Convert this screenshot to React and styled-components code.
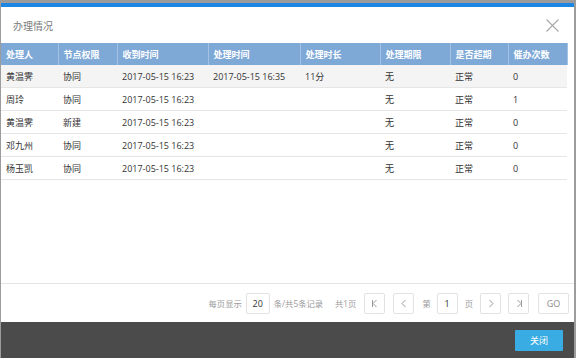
import React from "react";
import styled, { createGlobalStyle } from "styled-components";

const GlobalStyle = createGlobalStyle`
  html, body {
    margin: 0;
    padding: 0;
    background: #9c9c9c;
    font-family: "Open Sans", "Noto Sans CJK SC", sans-serif;
  }
`;

const columns = [
  { title: "处理人", width: 57 },
  { title: "节点权限", width: 59 },
  { title: "收到时间", width: 91 },
  { title: "处理时间", width: 92 },
  { title: "处理时长", width: 80 },
  { title: "处理期限", width: 70 },
  { title: "是否超期", width: 58 },
  { title: "催办次数", width: 59 },
];

const rows = [
  ["黄温霁", "协同", "2017-05-15 16:23", "2017-05-15 16:35", "11分", "无", "正常", "0"],
  ["周玲", "协同", "2017-05-15 16:23", "", "", "无", "正常", "1"],
  ["黄温霁", "新建", "2017-05-15 16:23", "", "", "无", "正常", "0"],
  ["邓九州", "协同", "2017-05-15 16:23", "", "", "无", "正常", "0"],
  ["杨玉凯", "协同", "2017-05-15 16:23", "", "", "无", "正常", "0"],
];

const Modal = styled.div`
  margin: 3px 2px 0 1px;
  height: 351px;
  background: #fff;
  border-top: 4px solid #1c86e2;
  display: flex;
  flex-direction: column;
`;

const Header = styled.div`
  height: 36px;
  display: flex;
  align-items: center;
  justify-content: space-between;
  padding: 0 15px 0 12px;
`;

const Title = styled.div`
  font-size: 10px;
  color: #7a7a7a;
`;

const Close = styled.button`
  border: 0;
  background: none;
  padding: 0;
  width: 13px;
  height: 13px;
  display: flex;
  cursor: pointer;
`;

const TableWrap = styled.div`
  flex: 1;
  padding-right: 6px;
  border-bottom: 1px solid #e4e4e4;
`;

const Table = styled.table`
  width: 566px;
  table-layout: fixed;
  border-collapse: collapse;
  font-size: 9px;
`;

const Th = styled.th`
  height: 22px;
  padding: 0 0 0 5px;
  background: #7ea9d7;
  color: #fff;
  font-weight: bold;
  text-align: left;
  border-right: 1px solid #a3c2e4;
  white-space: nowrap;
`;

const Tr = styled.tr`
  background: ${(p) => (p.$shaded ? "#f4f4f4" : "#fff")};
  border-bottom: 1px solid #e6e6e6;
`;

const Td = styled.td`
  height: 22px;
  padding: 0 0 0 5px;
  color: #333;
  white-space: nowrap;
`;

const Pager = styled.div`
  height: 38px;
  display: flex;
  align-items: center;
  justify-content: flex-end;
  padding-right: 5px;
  font-size: 8.3px;
  color: #9a9a9a;
`;

const Label = styled.span`
  margin: 0 ${(p) => p.$gap ?? 4}px 0 0;
  white-space: nowrap;
`;

const Box = styled.div`
  width: ${(p) => p.$w ?? 21}px;
  height: 21px;
  box-sizing: border-box;
  border: 1px solid #e2e2e2;
  border-radius: 2px;
  display: flex;
  align-items: center;
  justify-content: center;
  margin-right: ${(p) => p.$gap ?? 4}px;
  color: ${(p) => (p.$dark ? "#333" : "#8a8a8a")};
  font-size: 9px;
  background: #fff;
`;

const Footer = styled.div`
  height: 36px;
  background: #4b4b4b;
  display: flex;
  align-items: center;
  justify-content: flex-end;
  padding-right: 11px;
`;

const CloseBtn = styled.button`
  width: 48px;
  height: 21px;
  border: 0;
  border-radius: 1px;
  background: #39ade3;
  color: #fff;
  font-family: "Noto Sans CJK SC", sans-serif;
  font-size: 9px;
  padding: 0;
`;

const Chevron = ({ dir, bar }) => {
  const left = dir === "left";
  return (
    <svg width="8" height="9" viewBox="0 0 8 9" fill="none" stroke="#999" strokeWidth="1">
      {left ? <path d="M5.5 1 L2 4.5 L5.5 8" /> : <path d="M2.5 1 L6 4.5 L2.5 8" />}
      {bar && (left ? <path d="M1.5 1 V8" /> : <path d="M6.5 1 V8" />)}
    </svg>
  );
};

export default function App() {
  return (
    <>
      <GlobalStyle />
      <Modal>
        <Header>
          <Title>办理情况</Title>
          <Close aria-label="close">
            <svg width="13" height="13" viewBox="0 0 13 13" stroke="#a9a9a9" strokeWidth="1.1">
              <path d="M0.5 0.5 L12.5 12.5 M12.5 0.5 L0.5 12.5" />
            </svg>
          </Close>
        </Header>
        <TableWrap>
          <Table>
            <colgroup>
              {columns.map((c) => (
                <col key={c.title} style={{ width: c.width }} />
              ))}
            </colgroup>
            <thead>
              <tr>
                {columns.map((c) => (
                  <Th key={c.title}>{c.title}</Th>
                ))}
              </tr>
            </thead>
            <tbody>
              {rows.map((r, i) => (
                <Tr key={i} $shaded={i === 0}>
                  {r.map((v, j) => (
                    <Td key={j}>{v}</Td>
                  ))}
                </Tr>
              ))}
            </tbody>
          </Table>
        </TableWrap>
        <Pager>
          <Label>每页显示</Label>
          <Box $w={24} $dark>20</Box>
          <Label $gap={12}>条/共5条记录</Label>
          <Label $gap={8}>共1页</Label>
          <Box $gap={8}><Chevron dir="left" bar /></Box>
          <Box $gap={8}><Chevron dir="left" /></Box>
          <Label $gap={6}>第</Label>
          <Box $dark $gap={7}>1</Box>
          <Label $gap={7}>页</Label>
          <Box $gap={7}><Chevron dir="right" /></Box>
          <Box $gap={9}><Chevron dir="right" bar /></Box>
          <Box $w={31} $gap={0}>GO</Box>
        </Pager>
        <Footer>
          <CloseBtn>关闭</CloseBtn>
        </Footer>
      </Modal>
    </>
  );
}
